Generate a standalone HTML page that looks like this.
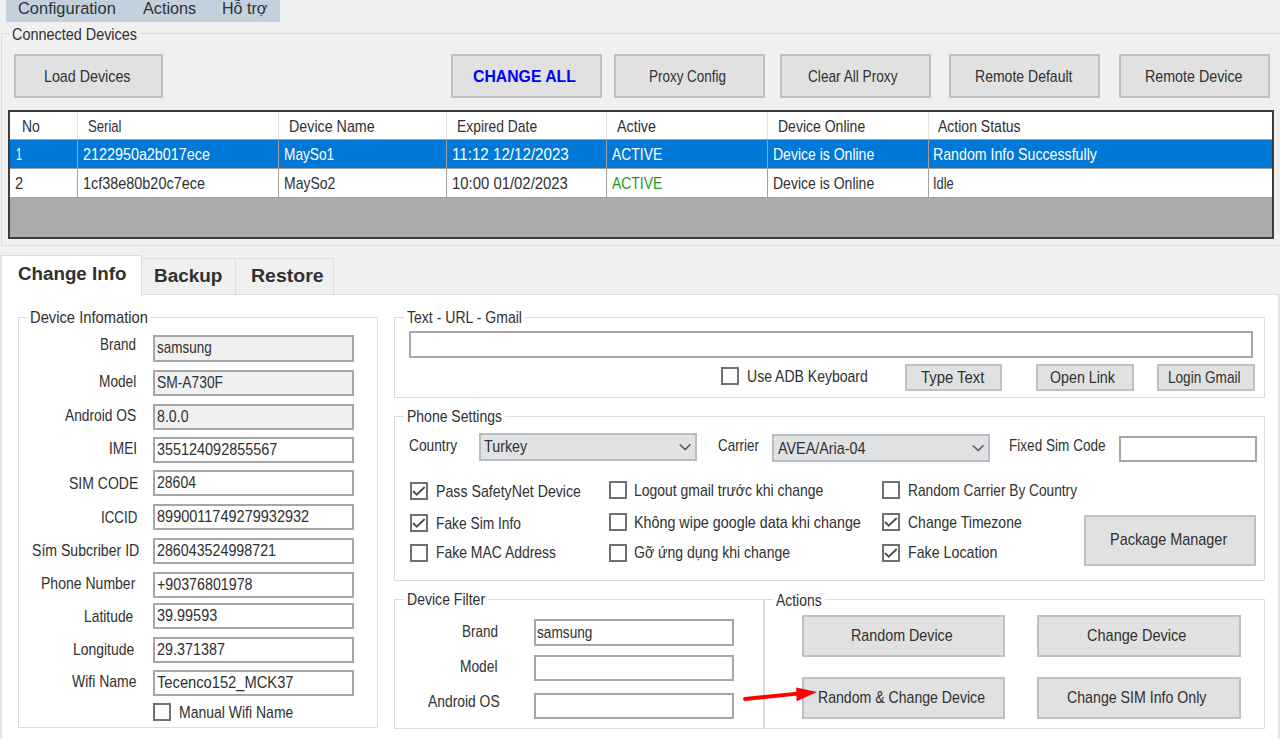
<!DOCTYPE html>
<html><head><meta charset="utf-8"><style>
html,body{margin:0;padding:0;}
body{width:1280px;height:739px;overflow:hidden;background:#f0f0f0;position:relative;font-family:"Liberation Sans",sans-serif;}
.a{position:absolute;}
.t{position:absolute;white-space:nowrap;transform-origin:0 0;}
</style></head><body>
<div class="a" style="left:6px;top:0px;width:274px;height:22px;background:#c3d0de;"></div>
<div class="t" style="left:18.40px;top:0px;font-size:16.79px;line-height:17px;color:#303030;transform:scaleX(0.9795);">Configuration</div>
<div class="t" style="left:142.50px;top:0px;font-size:16.79px;line-height:17px;color:#303030;transform:scaleX(0.9643);">Actions</div>
<div class="t" style="left:221.90px;top:0px;font-size:16.79px;line-height:17px;color:#303030;transform:scaleX(0.9562);">Hỗ trợ</div>
<div class="a" style="left:1px;top:33px;width:1289px;height:213px;border:1px solid #dcdcdc;box-sizing:border-box;"></div>
<div class="a" style="left:9px;top:31px;width:131px;height:5px;background:#f0f0f0;"></div>
<div class="t" style="left:12.00px;top:26px;font-size:16.16px;line-height:16px;color:#303030;transform:scaleX(0.8922);">Connected Devices</div>
<div class="a" style="left:14px;top:54px;width:149px;height:44px;background:#e1e1e1;border:2px solid #c0c0c0;box-sizing:border-box;"></div>
<div class="t" style="left:44.00px;top:68px;font-size:16.16px;line-height:16px;color:#303030;transform:scaleX(0.8833);">Load Devices</div>
<div class="a" style="left:451px;top:54px;width:151px;height:44px;background:#e1e1e1;border:2px solid #c0c0c0;box-sizing:border-box;"></div>
<div class="t" style="left:473.00px;top:68px;font-size:16.43px;line-height:16px;color:#0000ff;transform:scaleX(0.9614);font-weight:bold;">CHANGE ALL</div>
<div class="a" style="left:614px;top:54px;width:151px;height:44px;background:#e1e1e1;border:2px solid #c0c0c0;box-sizing:border-box;"></div>
<div class="t" style="left:649.00px;top:68px;font-size:16.16px;line-height:16px;color:#303030;transform:scaleX(0.8323);">Proxy Config</div>
<div class="a" style="left:780px;top:54px;width:151px;height:44px;background:#e1e1e1;border:2px solid #c0c0c0;box-sizing:border-box;"></div>
<div class="t" style="left:808.00px;top:68px;font-size:16.16px;line-height:16px;color:#303030;transform:scaleX(0.8443);">Clear All Proxy</div>
<div class="a" style="left:949px;top:54px;width:151px;height:44px;background:#e1e1e1;border:2px solid #c0c0c0;box-sizing:border-box;"></div>
<div class="t" style="left:974.50px;top:68px;font-size:16.16px;line-height:16px;color:#303030;transform:scaleX(0.8682);">Remote Default</div>
<div class="a" style="left:1119px;top:54px;width:151px;height:44px;background:#e1e1e1;border:2px solid #c0c0c0;box-sizing:border-box;"></div>
<div class="t" style="left:1144.50px;top:68px;font-size:16.16px;line-height:16px;color:#303030;transform:scaleX(0.8828);">Remote Device</div>
<div class="a" style="left:8px;top:110px;width:1266px;height:129px;background:#ababab;border:2px solid #3c3c3c;box-sizing:border-box;"></div>
<div class="a" style="left:10px;top:112px;width:1262px;height:27px;background:#fff;"></div>
<div class="a" style="left:10px;top:139px;width:1262px;height:1px;background:#a0a0a0;"></div>
<div class="a" style="left:10px;top:140px;width:1262px;height:28px;background:#0078d7;"></div>
<div class="a" style="left:10px;top:168px;width:1262px;height:1px;background:#a0a0a0;"></div>
<div class="a" style="left:10px;top:169px;width:1262px;height:28px;background:#fff;"></div>
<div class="a" style="left:10px;top:197px;width:1262px;height:1px;background:#a0a0a0;"></div>
<div class="a" style="left:77px;top:112px;width:1px;height:27px;background:#e3e3e3;"></div>
<div class="a" style="left:77px;top:140px;width:1px;height:57px;background:#a0a0a0;"></div>
<div class="a" style="left:278px;top:112px;width:1px;height:27px;background:#e3e3e3;"></div>
<div class="a" style="left:278px;top:140px;width:1px;height:57px;background:#a0a0a0;"></div>
<div class="a" style="left:446px;top:112px;width:1px;height:27px;background:#e3e3e3;"></div>
<div class="a" style="left:446px;top:140px;width:1px;height:57px;background:#a0a0a0;"></div>
<div class="a" style="left:606px;top:112px;width:1px;height:27px;background:#e3e3e3;"></div>
<div class="a" style="left:606px;top:140px;width:1px;height:57px;background:#a0a0a0;"></div>
<div class="a" style="left:767px;top:112px;width:1px;height:27px;background:#e3e3e3;"></div>
<div class="a" style="left:767px;top:140px;width:1px;height:57px;background:#a0a0a0;"></div>
<div class="a" style="left:928px;top:112px;width:1px;height:27px;background:#e3e3e3;"></div>
<div class="a" style="left:928px;top:140px;width:1px;height:57px;background:#a0a0a0;"></div>
<div class="t" style="left:21.90px;top:118px;font-size:16.16px;line-height:16px;color:#303030;transform:scaleX(0.8630);">No</div>
<div class="t" style="left:87.75px;top:118px;font-size:16.16px;line-height:16px;color:#303030;transform:scaleX(0.8114);">Serial</div>
<div class="t" style="left:288.75px;top:118px;font-size:16.16px;line-height:16px;color:#303030;transform:scaleX(0.8834);">Device Name</div>
<div class="t" style="left:456.50px;top:118px;font-size:16.16px;line-height:16px;color:#303030;transform:scaleX(0.8576);">Expired Date</div>
<div class="t" style="left:616.60px;top:118px;font-size:16.16px;line-height:16px;color:#303030;transform:scaleX(0.8857);">Active</div>
<div class="t" style="left:778.40px;top:118px;font-size:16.16px;line-height:16px;color:#303030;transform:scaleX(0.8669);">Device Online</div>
<div class="t" style="left:938.40px;top:118px;font-size:16.16px;line-height:16px;color:#303030;transform:scaleX(0.8679);">Action Status</div>
<div class="t" style="left:16.25px;top:146px;font-size:16.16px;line-height:16px;color:#fff;transform:scaleX(0.6690);">1</div>
<div class="t" style="left:82.50px;top:146px;font-size:16.16px;line-height:16px;color:#fff;transform:scaleX(0.8886);">2122950a2b017ece</div>
<div class="t" style="left:283.75px;top:146px;font-size:16.16px;line-height:16px;color:#fff;transform:scaleX(0.8473);">MaySo1</div>
<div class="t" style="left:451.60px;top:146px;font-size:16.16px;line-height:16px;color:#fff;transform:scaleX(0.9375);">11:12 12/12/2023</div>
<div class="t" style="left:611.60px;top:146px;font-size:16.16px;line-height:16px;color:#fff;transform:scaleX(0.8606);">ACTIVE</div>
<div class="t" style="left:772.80px;top:146px;font-size:16.16px;line-height:16px;color:#fff;transform:scaleX(0.8668);">Device is Online</div>
<div class="t" style="left:933.10px;top:146px;font-size:16.16px;line-height:16px;color:#fff;transform:scaleX(0.8774);">Random Info Successfully</div>
<div class="t" style="left:15.00px;top:175px;font-size:16.16px;line-height:16px;color:#303030;transform:scaleX(0.9032);">2</div>
<div class="t" style="left:83.10px;top:175px;font-size:16.16px;line-height:16px;color:#303030;transform:scaleX(0.8928);">1cf38e80b20c7ece</div>
<div class="t" style="left:283.75px;top:175px;font-size:16.16px;line-height:16px;color:#303030;transform:scaleX(0.8642);">MaySo2</div>
<div class="t" style="left:451.60px;top:175px;font-size:16.16px;line-height:16px;color:#303030;transform:scaleX(0.9213);">10:00 01/02/2023</div>
<div class="t" style="left:611.60px;top:175px;font-size:16.16px;line-height:16px;color:#1a9a1a;transform:scaleX(0.8606);">ACTIVE</div>
<div class="t" style="left:772.80px;top:175px;font-size:16.16px;line-height:16px;color:#303030;transform:scaleX(0.8668);">Device is Online</div>
<div class="t" style="left:933.10px;top:175px;font-size:16.16px;line-height:16px;color:#303030;transform:scaleX(0.7957);">Idle</div>
<div class="a" style="left:0px;top:294px;width:1280px;height:460px;background:#fff;border:2px solid #e3e3e3;box-sizing:border-box;border-top:1px solid #dcdcdc;"></div>
<div class="a" style="left:141px;top:258px;width:95px;height:37px;background:#f0f0f0;border:1px solid #dcdcdc;box-sizing:border-box;"></div>
<div class="a" style="left:235px;top:258px;width:99px;height:37px;background:#f0f0f0;border:1px solid #dcdcdc;box-sizing:border-box;"></div>
<div class="a" style="left:0px;top:255px;width:142px;height:41px;background:#fff;border:2px solid #e3e3e3;box-sizing:border-box;border-bottom:none;border-top:1px solid #dcdcdc;border-right:1px solid #dcdcdc;"></div>
<div class="t" style="left:17.50px;top:264px;font-size:18.80px;line-height:19px;color:#303030;transform:scaleX(0.9985);font-weight:bold;">Change Info</div>
<div class="t" style="left:154.30px;top:266px;font-size:18.80px;line-height:19px;color:#303030;transform:scaleX(1.0078);font-weight:bold;">Backup</div>
<div class="t" style="left:250.60px;top:266px;font-size:18.80px;line-height:19px;color:#303030;transform:scaleX(1.0381);font-weight:bold;">Restore</div>
<div class="a" style="left:18px;top:317px;width:360px;height:411px;border:1px solid #dcdcdc;box-sizing:border-box;"></div>
<div class="a" style="left:27px;top:315px;width:124px;height:5px;background:#fff;"></div>
<div class="t" style="left:30.00px;top:309px;font-size:16.16px;line-height:16px;color:#303030;transform:scaleX(0.9122);">Device Infomation</div>
<div class="a" style="left:153px;top:335px;width:201px;height:27px;background:#f0f0f0;border:2px solid #a6a6a6;box-sizing:border-box;"></div>
<div class="t" style="left:100.00px;top:336px;font-size:16.16px;line-height:16px;color:#303030;transform:scaleX(0.8344);">Brand</div>
<div class="t" style="left:157.20px;top:339px;font-size:16.16px;line-height:16px;color:#303030;transform:scaleX(0.8353);">samsung</div>
<div class="a" style="left:153px;top:370px;width:201px;height:26px;background:#f0f0f0;border:2px solid #a6a6a6;box-sizing:border-box;"></div>
<div class="t" style="left:98.75px;top:373px;font-size:16.16px;line-height:16px;color:#303030;transform:scaleX(0.8460);">Model</div>
<div class="t" style="left:157.20px;top:374px;font-size:16.16px;line-height:16px;color:#303030;transform:scaleX(0.8551);">SM-A730F</div>
<div class="a" style="left:153px;top:404px;width:201px;height:26px;background:#f0f0f0;border:2px solid #a6a6a6;box-sizing:border-box;"></div>
<div class="t" style="left:65.00px;top:407px;font-size:16.16px;line-height:16px;color:#303030;transform:scaleX(0.8529);">Android OS</div>
<div class="t" style="left:157.20px;top:408px;font-size:16.16px;line-height:16px;color:#303030;transform:scaleX(0.8775);">8.0.0</div>
<div class="a" style="left:153px;top:437px;width:201px;height:26px;background:#fff;border:2px solid #a6a6a6;box-sizing:border-box;"></div>
<div class="t" style="left:109.40px;top:440px;font-size:16.16px;line-height:16px;color:#303030;transform:scaleX(0.8462);">IMEI</div>
<div class="t" style="left:157.20px;top:441px;font-size:16.16px;line-height:16px;color:#303030;transform:scaleX(0.8921);">355124092855567</div>
<div class="a" style="left:153px;top:470px;width:201px;height:26px;background:#fff;border:2px solid #a6a6a6;box-sizing:border-box;"></div>
<div class="t" style="left:68.75px;top:475px;font-size:16.16px;line-height:16px;color:#303030;transform:scaleX(0.8679);">SIM CODE</div>
<div class="t" style="left:157.20px;top:474px;font-size:16.16px;line-height:16px;color:#303030;transform:scaleX(0.8693);">28604</div>
<div class="a" style="left:153px;top:504px;width:201px;height:26px;background:#fff;border:2px solid #a6a6a6;box-sizing:border-box;"></div>
<div class="t" style="left:101.25px;top:509px;font-size:16.16px;line-height:16px;color:#303030;transform:scaleX(0.8248);">ICCID</div>
<div class="t" style="left:157.20px;top:508px;font-size:16.16px;line-height:16px;color:#303030;transform:scaleX(0.8975);">8990011749279932932</div>
<div class="a" style="left:153px;top:538px;width:201px;height:26px;background:#fff;border:2px solid #a6a6a6;box-sizing:border-box;"></div>
<div class="t" style="left:31.50px;top:542px;font-size:16.16px;line-height:16px;color:#303030;transform:scaleX(0.8716);">Sím Subcriber ID</div>
<div class="t" style="left:157.20px;top:542px;font-size:16.16px;line-height:16px;color:#303030;transform:scaleX(0.8832);">286043524998721</div>
<div class="a" style="left:153px;top:572px;width:201px;height:26px;background:#fff;border:2px solid #a6a6a6;box-sizing:border-box;"></div>
<div class="t" style="left:41.25px;top:575px;font-size:16.16px;line-height:16px;color:#303030;transform:scaleX(0.8682);">Phone Number</div>
<div class="t" style="left:157.20px;top:576px;font-size:16.16px;line-height:16px;color:#303030;transform:scaleX(0.8821);">+90376801978</div>
<div class="a" style="left:153px;top:603px;width:201px;height:26px;background:#fff;border:2px solid #a6a6a6;box-sizing:border-box;"></div>
<div class="t" style="left:83.75px;top:608px;font-size:16.16px;line-height:16px;color:#303030;transform:scaleX(0.8579);">Latitude</div>
<div class="t" style="left:157.20px;top:607px;font-size:16.16px;line-height:16px;color:#303030;transform:scaleX(0.8934);">39.99593</div>
<div class="a" style="left:153px;top:637px;width:201px;height:26px;background:#fff;border:2px solid #a6a6a6;box-sizing:border-box;"></div>
<div class="t" style="left:73.10px;top:641px;font-size:16.16px;line-height:16px;color:#303030;transform:scaleX(0.8632);">Longitude</div>
<div class="t" style="left:157.20px;top:641px;font-size:16.16px;line-height:16px;color:#303030;transform:scaleX(0.8893);">29.371387</div>
<div class="a" style="left:153px;top:670px;width:201px;height:26px;background:#fff;border:2px solid #a6a6a6;box-sizing:border-box;"></div>
<div class="t" style="left:71.50px;top:673px;font-size:16.16px;line-height:16px;color:#303030;transform:scaleX(0.8659);">Wifi Name</div>
<div class="t" style="left:157.20px;top:674px;font-size:16.16px;line-height:16px;color:#303030;transform:scaleX(0.9101);">Tecenco152_MCK37</div>
<div class="a" style="left:153px;top:703px;width:18px;height:18px;background:#fff;border:2px solid #707070;box-sizing:border-box;"></div>
<div class="t" style="left:179.40px;top:704px;font-size:16.16px;line-height:16px;color:#303030;transform:scaleX(0.8662);">Manual Wifi Name</div>
<div class="a" style="left:394px;top:317px;width:871px;height:81px;border:1px solid #dcdcdc;box-sizing:border-box;"></div>
<div class="a" style="left:403.6px;top:315px;width:121.0px;height:5px;background:#fff;"></div>
<div class="t" style="left:406.60px;top:309px;font-size:16.16px;line-height:16px;color:#303030;transform:scaleX(0.8695);">Text - URL - Gmail</div>
<div class="a" style="left:409px;top:331px;width:844px;height:27px;background:#fff;border:2px solid #a6a6a6;box-sizing:border-box;"></div>
<div class="a" style="left:721px;top:367px;width:18px;height:18px;background:#fff;border:2px solid #707070;box-sizing:border-box;"></div>
<div class="t" style="left:747.25px;top:368px;font-size:16.16px;line-height:16px;color:#303030;transform:scaleX(0.8681);">Use ADB Keyboard</div>
<div class="a" style="left:905px;top:364px;width:97px;height:27px;background:#e1e1e1;border:2px solid #c0c0c0;box-sizing:border-box;"></div>
<div class="t" style="left:920.75px;top:369px;font-size:16.16px;line-height:16px;color:#303030;transform:scaleX(0.9203);">Type Text</div>
<div class="a" style="left:1036px;top:364px;width:98px;height:27px;background:#e1e1e1;border:2px solid #c0c0c0;box-sizing:border-box;"></div>
<div class="t" style="left:1049.50px;top:369px;font-size:16.16px;line-height:16px;color:#303030;transform:scaleX(0.8812);">Open Link</div>
<div class="a" style="left:1157px;top:364px;width:98px;height:27px;background:#e1e1e1;border:2px solid #c0c0c0;box-sizing:border-box;"></div>
<div class="t" style="left:1168.25px;top:369px;font-size:16.16px;line-height:16px;color:#303030;transform:scaleX(0.8410);">Login Gmail</div>
<div class="a" style="left:394px;top:416px;width:871px;height:165px;border:1px solid #dcdcdc;box-sizing:border-box;"></div>
<div class="a" style="left:403.9px;top:414px;width:101.0px;height:5px;background:#fff;"></div>
<div class="t" style="left:406.90px;top:408px;font-size:16.16px;line-height:16px;color:#303030;transform:scaleX(0.8665);">Phone Settings</div>
<div class="t" style="left:409.40px;top:437px;font-size:16.16px;line-height:16px;color:#303030;transform:scaleX(0.8505);">Country</div>
<div class="a" style="left:479px;top:433px;width:218px;height:28px;background:#e1e2e4;border:2px solid #b9bdc3;box-sizing:border-box;"></div>
<div class="t" style="left:484.00px;top:438px;font-size:16.16px;line-height:16px;color:#303030;transform:scaleX(0.8850);">Turkey</div>
<svg class="a" style="left:677.5px;top:442.0px" width="14" height="10"><path d="M1.7 2.5 L7.2 7.6 L12.5 2.2" fill="none" stroke="#505050" stroke-width="1.4"/></svg>
<div class="t" style="left:717.50px;top:437px;font-size:16.16px;line-height:16px;color:#303030;transform:scaleX(0.8305);">Carrier</div>
<div class="a" style="left:772px;top:434px;width:218px;height:28px;background:#e1e2e4;border:2px solid #b9bdc3;box-sizing:border-box;"></div>
<div class="t" style="left:777.50px;top:440px;font-size:16.16px;line-height:16px;color:#303030;transform:scaleX(0.8884);">AVEA/Aria-04</div>
<svg class="a" style="left:970.5px;top:443.0px" width="14" height="10"><path d="M1.7 2.5 L7.2 7.6 L12.5 2.2" fill="none" stroke="#505050" stroke-width="1.4"/></svg>
<div class="t" style="left:1009.10px;top:437px;font-size:16.16px;line-height:16px;color:#303030;transform:scaleX(0.8411);">Fixed Sim Code</div>
<div class="a" style="left:1119px;top:436px;width:138px;height:26px;background:#fff;border:2px solid #a6a6a6;box-sizing:border-box;"></div>
<div class="a" style="left:410px;top:482px;width:18px;height:18px;background:#fff;border:2px solid #707070;box-sizing:border-box;"></div>
<svg class="a" style="left:410px;top:482px" width="18" height="18"><path d="M3 9 L6.7 12.7 L14.7 5" fill="none" stroke="#4a4a4a" stroke-width="1.8"/></svg>
<div class="t" style="left:436.25px;top:483px;font-size:16.16px;line-height:16px;color:#303030;transform:scaleX(0.8776);">Pass SafetyNet Device</div>
<div class="a" style="left:410px;top:514px;width:18px;height:18px;background:#fff;border:2px solid #707070;box-sizing:border-box;"></div>
<svg class="a" style="left:410px;top:514px" width="18" height="18"><path d="M3 9 L6.7 12.7 L14.7 5" fill="none" stroke="#4a4a4a" stroke-width="1.8"/></svg>
<div class="t" style="left:436.25px;top:515px;font-size:16.16px;line-height:16px;color:#303030;transform:scaleX(0.8525);">Fake Sim Info</div>
<div class="a" style="left:410px;top:544px;width:18px;height:18px;background:#fff;border:2px solid #707070;box-sizing:border-box;"></div>
<div class="t" style="left:436.25px;top:544px;font-size:16.16px;line-height:16px;color:#303030;transform:scaleX(0.8620);">Fake MAC Address</div>
<div class="a" style="left:609px;top:481px;width:18px;height:18px;background:#fff;border:2px solid #707070;box-sizing:border-box;"></div>
<div class="t" style="left:634.40px;top:482px;font-size:16.16px;line-height:16px;color:#303030;transform:scaleX(0.8645);">Logout gmail trước khi change</div>
<div class="a" style="left:609px;top:513px;width:18px;height:18px;background:#fff;border:2px solid #707070;box-sizing:border-box;"></div>
<div class="t" style="left:634.40px;top:514px;font-size:16.16px;line-height:16px;color:#303030;transform:scaleX(0.8860);">Không wipe google data khi change</div>
<div class="a" style="left:609px;top:544px;width:18px;height:18px;background:#fff;border:2px solid #707070;box-sizing:border-box;"></div>
<div class="t" style="left:634.40px;top:544px;font-size:16.16px;line-height:16px;color:#303030;transform:scaleX(0.8695);">Gỡ ứng dụng khi change</div>
<div class="a" style="left:882px;top:481px;width:18px;height:18px;background:#fff;border:2px solid #707070;box-sizing:border-box;"></div>
<div class="t" style="left:907.50px;top:482px;font-size:16.16px;line-height:16px;color:#303030;transform:scaleX(0.8480);">Random Carrier By Country</div>
<div class="a" style="left:882px;top:513px;width:18px;height:18px;background:#fff;border:2px solid #707070;box-sizing:border-box;"></div>
<svg class="a" style="left:882px;top:513px" width="18" height="18"><path d="M3 9 L6.7 12.7 L14.7 5" fill="none" stroke="#4a4a4a" stroke-width="1.8"/></svg>
<div class="t" style="left:907.50px;top:514px;font-size:16.16px;line-height:16px;color:#303030;transform:scaleX(0.8675);">Change Timezone</div>
<div class="a" style="left:882px;top:544px;width:18px;height:18px;background:#fff;border:2px solid #707070;box-sizing:border-box;"></div>
<svg class="a" style="left:882px;top:544px" width="18" height="18"><path d="M3 9 L6.7 12.7 L14.7 5" fill="none" stroke="#4a4a4a" stroke-width="1.8"/></svg>
<div class="t" style="left:907.50px;top:544px;font-size:16.16px;line-height:16px;color:#303030;transform:scaleX(0.8810);">Fake Location</div>
<div class="a" style="left:1084px;top:515px;width:172px;height:51px;background:#e1e1e1;border:2px solid #c0c0c0;box-sizing:border-box;"></div>
<div class="t" style="left:1110.10px;top:531px;font-size:16.16px;line-height:16px;color:#303030;transform:scaleX(0.8938);">Package Manager</div>
<div class="a" style="left:394px;top:599px;width:370px;height:130px;border:1px solid #dcdcdc;box-sizing:border-box;"></div>
<div class="a" style="left:403.9px;top:597px;width:84.10000000000002px;height:5px;background:#fff;"></div>
<div class="t" style="left:406.90px;top:591px;font-size:16.16px;line-height:16px;color:#303030;transform:scaleX(0.8701);">Device Filter</div>
<div class="a" style="left:534px;top:619px;width:200px;height:27px;background:#fff;border:2px solid #a6a6a6;box-sizing:border-box;"></div>
<div class="t" style="left:461.50px;top:623px;font-size:16.16px;line-height:16px;color:#303030;transform:scaleX(0.8344);">Brand</div>
<div class="t" style="left:537.00px;top:624px;font-size:16.16px;line-height:16px;color:#303030;transform:scaleX(0.8460);">samsung</div>
<div class="a" style="left:534px;top:655px;width:200px;height:26px;background:#fff;border:2px solid #a6a6a6;box-sizing:border-box;"></div>
<div class="t" style="left:460.25px;top:658px;font-size:16.16px;line-height:16px;color:#303030;transform:scaleX(0.8516);">Model</div>
<div class="a" style="left:534px;top:693px;width:200px;height:26px;background:#fff;border:2px solid #a6a6a6;box-sizing:border-box;"></div>
<div class="t" style="left:427.75px;top:693px;font-size:16.16px;line-height:16px;color:#303030;transform:scaleX(0.8577);">Android OS</div>
<div class="a" style="left:764px;top:599px;width:501px;height:130px;border:1px solid #dcdcdc;box-sizing:border-box;"></div>
<div class="a" style="left:773.25px;top:597px;width:51.64999999999998px;height:5px;background:#fff;"></div>
<div class="t" style="left:776.25px;top:592px;font-size:16.16px;line-height:16px;color:#303030;transform:scaleX(0.8613);">Actions</div>
<div class="a" style="left:802px;top:615px;width:203px;height:42px;background:#e1e1e1;border:2px solid #c0c0c0;box-sizing:border-box;"></div>
<div class="t" style="left:851.25px;top:627px;font-size:16.16px;line-height:16px;color:#303030;transform:scaleX(0.8850);">Random Device</div>
<div class="a" style="left:1037px;top:615px;width:204px;height:42px;background:#e1e1e1;border:2px solid #c0c0c0;box-sizing:border-box;"></div>
<div class="t" style="left:1087.00px;top:627px;font-size:16.16px;line-height:16px;color:#303030;transform:scaleX(0.9002);">Change Device</div>
<div class="a" style="left:802px;top:677px;width:203px;height:42px;background:#e1e1e1;border:2px solid #c0c0c0;box-sizing:border-box;"></div>
<div class="t" style="left:818.00px;top:689px;font-size:16.16px;line-height:16px;color:#303030;transform:scaleX(0.8729);">Random &amp; Change Device</div>
<div class="a" style="left:1037px;top:677px;width:204px;height:42px;background:#e1e1e1;border:2px solid #c0c0c0;box-sizing:border-box;"></div>
<div class="t" style="left:1067.20px;top:689px;font-size:16.16px;line-height:16px;color:#303030;transform:scaleX(0.8773);">Change SIM Info Only</div>
<svg class="a" style="left:740px;top:680px" width="90" height="30"><path d="M5 19 L60 13.3" stroke="#ff0000" stroke-width="3.8" stroke-linecap="round" fill="none"/><path d="M56.2 7.6 L77 12 L56.6 21.2 Z" fill="#ff0000"/></svg>
</body></html>
